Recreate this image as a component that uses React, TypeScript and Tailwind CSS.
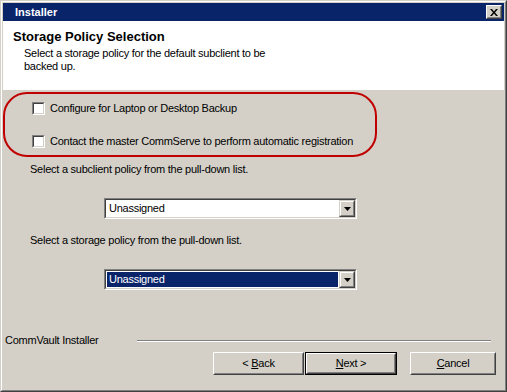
import React from "react";

const font = { fontFamily: '"Liberation Sans", Arial, sans-serif', letterSpacing: "-0.25px" };

function Checkbox() {
  return (
    <div className="w-[13px] h-[13px] border border-t-[#808080] border-l-[#808080] border-r-white border-b-white shrink-0">
      <div className="w-full h-full bg-white border border-t-[#404040] border-l-[#404040] border-r-[#d4d0c8] border-b-[#d4d0c8]" />
    </div>
  );
}

function Dropdown({ selected }: { selected?: boolean }) {
  return (
    <div className="w-[253px] h-[21px] border border-t-[#808080] border-l-[#808080] border-r-white border-b-white">
      <div className="w-full h-full bg-white border border-t-[#404040] border-l-[#404040] border-r-[#d4d0c8] border-b-[#d4d0c8] flex items-stretch">
        <div className="flex-1 p-[1px] flex">
          <div
            className={
              "flex-1 flex items-center pl-[2px] text-[11px] " +
              (selected ? "bg-[#0a246a] text-white" : "text-black")
            }
          >
            Unassigned
          </div>
        </div>
        <div className="w-[16px] h-full border border-t-[#d4d0c8] border-l-[#d4d0c8] border-r-[#404040] border-b-[#404040]">
          <div className="w-full h-full bg-[#d4d0c8] border border-t-white border-l-white border-r-[#808080] border-b-[#808080] flex items-center justify-center">
            <svg width="7" height="4" viewBox="0 0 7 4">
              <path d="M0 0H7L3.5 4Z" fill="black" />
            </svg>
          </div>
        </div>
      </div>
    </div>
  );
}

function Button({
  children,
  width,
  isDefault,
}: {
  children: React.ReactNode;
  width: string;
  isDefault?: boolean;
}) {
  return (
    <div className={width + " h-[23px] " + (isDefault ? "border border-black" : "")}>
      <div className="w-full h-full border border-t-white border-l-white border-r-[#404040] border-b-[#404040]">
        <div className="w-full h-full bg-[#d4d0c8] border border-t-[#d4d0c8] border-l-[#d4d0c8] border-r-[#808080] border-b-[#808080] flex items-center justify-center text-[11px] text-black">
          {children}
        </div>
      </div>
    </div>
  );
}

export default function App() {
  return (
    <div style={font} className="w-[507px] h-[392px] bg-[#d4d0c8] border border-t-[#d4d0c8] border-l-[#d4d0c8] border-r-[#404040] border-b-[#404040]">
      <div className="w-full h-full border border-t-white border-l-white border-r-[#808080] border-b-[#808080] p-[1px] flex flex-col">
        {/* Title bar */}
        <div className="h-[18px] bg-[#0a246a] flex items-center pl-[12px] pr-[2px] shrink-0">
          <span className="text-white font-bold text-[11px] flex-1 tracking-normal">Installer</span>
          <div className="w-[16px] h-[14px] border border-t-white border-l-white border-r-[#404040] border-b-[#404040]">
            <div className="w-full h-full bg-[#d4d0c8] border border-t-[#d4d0c8] border-l-[#d4d0c8] border-r-[#808080] border-b-[#808080] flex items-center justify-center">
              <svg width="8" height="7" viewBox="0 0 8 7">
                <path d="M0 0h2l2 2.5L6 0h2L5 3.5 8 7H6L4 4.5 2 7H0l3-3.5Z" fill="black" />
              </svg>
            </div>
          </div>
        </div>
        {/* Header */}
        <div className="h-[69px] bg-white shrink-0 pl-[10px] pt-[8px]">
          <div className="font-bold text-[13px] text-black leading-[16px] tracking-normal">Storage Policy Selection</div>
          <div className="pl-[11px] text-[11px] leading-[13px] text-black w-[270px] mt-[2px]">
            Select a storage policy for the default subclient to be backed up.
          </div>
        </div>
        {/* Body */}
        <div className="flex-1 flex flex-col">
          <div className="mt-[2px] w-[374px] h-[65px] border-2 border-[#c00000] rounded-[24px] pl-[27px] pt-[8px] flex flex-col gap-[20px]">
            <div className="flex items-center gap-[5px] h-[13px] text-[11px] text-black">
              <Checkbox />
              <span>Configure for Laptop or Desktop Backup</span>
            </div>
            <div className="flex items-center gap-[5px] h-[13px] text-[11px] text-black">
              <Checkbox />
              <span>Contact the master CommServe to perform automatic registration</span>
            </div>
          </div>
          <div className="pl-[27px] mt-[6px] text-[11px] leading-[13px] text-black">
            Select a subclient policy from the pull-down list.
          </div>
          <div className="pl-[101px] mt-[22px]">
            <Dropdown />
          </div>
          <div className="pl-[27px] mt-[15px] text-[11px] leading-[13px] text-black">
            Select a storage policy from the pull-down list.
          </div>
          <div className="pl-[101px] mt-[22px]">
            <Dropdown selected />
          </div>
          <div className="flex-1" />
          {/* Footer */}
          <div className="flex items-center pl-[2px] pr-[13px] h-[13px]">
            <span className="text-[11px] text-black">CommVault Installer</span>
            <div className="flex-1 ml-[39px] border-t border-t-[#808080] border-b border-b-white h-0" />
          </div>
          <div className="flex justify-end pr-[8px] mt-[5px] mb-[14px]">
            <Button width="w-[91px]">
              &lt;&nbsp;<u>B</u>ack
            </Button>
            <div className="ml-[1px]">
              <Button width="w-[92px]" isDefault>
                <u>N</u>ext&nbsp;&gt;
              </Button>
            </div>
            <div className="ml-[13px]">
              <Button width="w-[86px]">
                <u>C</u>ancel
              </Button>
            </div>
          </div>
        </div>
      </div>
    </div>
  );
}
